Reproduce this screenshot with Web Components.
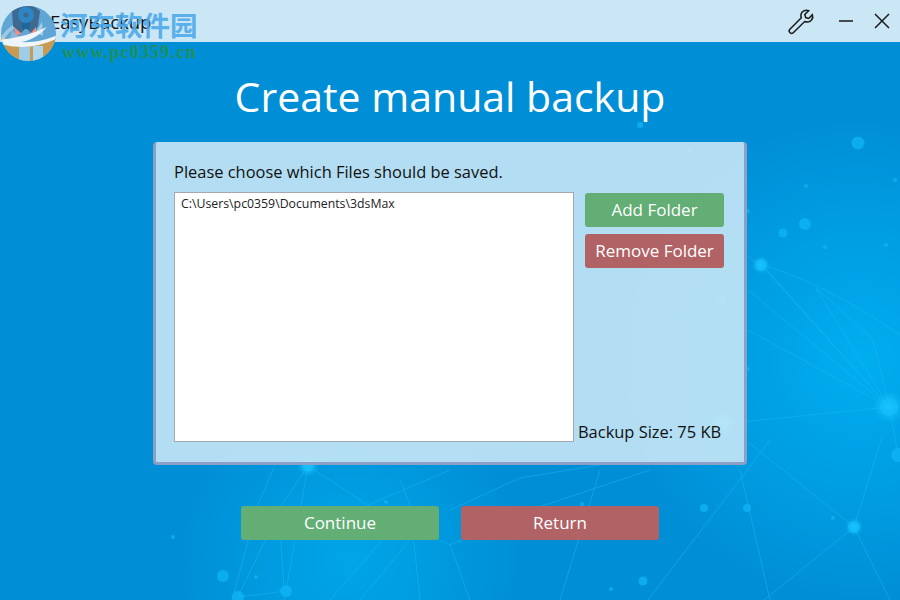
<!DOCTYPE html>
<html>
<head>
<meta charset="utf-8">
<title>EasyBackup</title>
<style>
html, body { margin: 0; padding: 0; }
body { width: 900px; height: 600px; overflow: hidden; font-family: "Open Sans", "Noto Sans", sans-serif; }
</style>
</head>
<body>
<backup-window>
  <app-titlebar slot="bar">EasyBackup</app-titlebar>
  <h-title slot="title">Create manual backup</h-title>
  <backup-panel slot="panel">
    <span slot="prompt">Please choose which Files should be saved.</span>
    <folder-list slot="list"><div>C:\Users\pc0359\Documents\3dsMax</div></folder-list>
    <flat-button slot="side" tone="green" h="34">Add Folder</flat-button>
    <flat-button slot="side" tone="red" h="34">Remove Folder</flat-button>
    <span slot="size">Backup Size: 75 KB</span>
  </backup-panel>
  <flat-button slot="foot" tone="green" h="34" w="198">Continue</flat-button>
  <flat-button slot="foot" tone="red" h="34" w="198">Return</flat-button>
</backup-window>

<script>
class NetBackdrop extends HTMLElement {
    constructor(){
        super();
        this.attachShadow({mode: "open"});
    }

    connectedCallback() {
        // nodes of the backdrop picture: x, y, radius
        const dots = [[858,143,6.5],[805,224,6],[783,233,4.500],[761,265,6],[889,407,9],[854,527,6],[898,455,7],
            [747,508,4],[704,508,4],[806,186,2],[895,180,2],[825,247,2],[886,245,2],[748,211,2],[748,369,2],
            [833,518,2],[722,300,4],[722,424,6],[308,466,5.500],[386,502,2],[582,504,2],[173,537,2],[223,576,6],
            [256,577,2],[286,591,6],[238,597,6],[643,581,4.500],[611,589,2],[640,125,3],[690,150,2]];
        const lines = [[761,265,889,407],[765,268,889,407],[816,288,889,407],[748,290,889,407],[748,330,889,407],
            [722,424,889,407],[748,442,854,527],[854,527,882,437],[854,527,764,600],[854,527,890,600],[889,407,898,455],
            [308,466,283,503],[283,503,238,597],[308,466,286,591],[308,466,368,505],[238,597,286,591],
            [275,465,258,505],[258,505,232,600],[368,505,450,470],[368,505,450,545],[400,480,410,505],[410,505,420,600],
            [450,510,520,478],[520,478,600,465],[450,545,470,600],[770,440,648,600],[740,470,770,600],
            [330,600,400,520],[360,600,410,540],[600,470,560,600],[285,600,280,530],
            [308,466,260,420],[308,466,320,400],[308,466,400,410],[722,424,600,380],[722,424,680,300],[600,380,500,460],
            [761,265,700,225],[700,300,600,340],[747,345,600,260]];
        const nodes = dots.map(d => `<circle cx="${d[0]}" cy="${d[1]}" r="${d[2]}"/>`).join("");
        const strokes = lines.map(l => `<line x1="${l[0]}" y1="${l[1]}" x2="${l[2]}" y2="${l[3]}"/>`).join("");
        this.shadowRoot.innerHTML = `
        <style>
        :host { position: absolute; inset: 0; display: block; }
        svg { display: block; }
        </style>
        <svg width="900" height="600" viewBox="0 0 900 600">
            <defs>
                <radialGradient id="glowR" cx="860" cy="360" r="240" gradientUnits="userSpaceOnUse">
                    <stop offset="0" stop-color="#00aeef"/><stop offset="1" stop-color="#00aeef" stop-opacity="0"/>
                </radialGradient>
                <radialGradient id="glowB" cx="350" cy="560" r="170" gradientUnits="userSpaceOnUse">
                    <stop offset="0" stop-color="#00a6e8"/><stop offset="1" stop-color="#00a6e8" stop-opacity="0"/>
                </radialGradient>
                <radialGradient id="halo"><stop offset="0" stop-color="#19c4ff"/><stop offset="1" stop-color="#19c4ff" stop-opacity="0"/></radialGradient>
            </defs>
            <rect width="900" height="600" fill="#008fd7"/>
            <rect width="900" height="600" fill="url(#glowR)"/>
            <rect width="900" height="600" fill="url(#glowB)"/>
            <g stroke="#1cb8f5" stroke-width="1" opacity=".5" fill="none">
                ${strokes}
                <path d="M761 265Q820 280 900 335"/>
                <path d="M816 288L868 335Q874 342 876 350L889 407"/>
                <path d="M450 545L530 510L650 470"/>
            </g>
            <g fill="#0fb4f6" opacity=".8">${nodes}</g>
            <circle cx="889" cy="407" r="16" fill="url(#halo)"/>
            <circle cx="761" cy="265" r="9" fill="url(#halo)"/>
            <circle cx="854" cy="527" r="9" fill="url(#halo)"/>
            <circle cx="308" cy="466" r="11" fill="url(#halo)"/>
            <circle cx="722" cy="424" r="14" fill="url(#halo)"/>
        </svg>`;
    }
}
customElements.define("net-backdrop", NetBackdrop);

class AppTitlebar extends HTMLElement {
    constructor(){
        super();
        this.attachShadow({mode: "open"});
    }

    connectedCallback() {
        this.shadowRoot.innerHTML = `
        <style>
        :host { display: flex; align-items: center; height: 42px; background: #cbe6f5; color: #111; font-size: 18.500px; padding-left: 50px; box-sizing: border-box; }
        .name { flex: 1; letter-spacing: -.1px; }
        .tools { display: flex; align-items: center; padding-right: 10px; }
        svg { display: block; fill: none; stroke: #1a1a1a; stroke-width: 1.5; }
        .wrench { margin-right: 22px; stroke-width: 1.3; }
        .dash { margin-right: 21px; }
        </style>
        <span class="name"><slot></slot></span>
        <div class="tools">
            <svg class="wrench" width="30" height="30" viewBox="0 0 26 26"><path d="M2.500 20.200L12.400 10.300C11.600 7.600 12.600 5.200 14.600 4.200C16 3.500 17.600 3.500 18.800 4.100L15.400 7.400L16.200 10L18.800 10.800L22 7.500C22.600 9 22.300 10.800 21.300 12.100C19.800 13.900 17.500 14.300 15.300 13.500L5.400 23.200C4.600 24 3.500 24 2.700 23.200L2.400 22.900C1.700 22.100 1.700 21 2.500 20.200Z"/></svg>
            <svg class="dash" width="14" height="2" viewBox="0 0 14 2"><path d="M0 1H14"/></svg>
            <svg width="16" height="16" viewBox="0 0 16 16"><path d="M1 1L15 15M15 1L1 15"/></svg>
        </div>`;
    }
}
customElements.define("app-titlebar", AppTitlebar);

class SiteStamp extends HTMLElement {
    constructor(){
        super();
        this.attachShadow({mode: "open"});
    }

    connectedCallback() {
        this.shadowRoot.innerHTML = `
        <style>
        :host { position: absolute; left: 0; top: 0; width: 210px; height: 66px; display: block; }
        svg { position: absolute; left: 0; top: 0; }
        .cn { position: absolute; left: 60px; top: 7px; font: 700 27.500px/34px "Noto Sans CJK SC", sans-serif; color: #4aa9e9; opacity: .88; }
        .url { position: absolute; left: 62px; top: 43px; font: 700 18px/19px "Liberation Serif", serif; color: #1f8f5a; letter-spacing: 1.2px; }
        </style>
        <svg width="64" height="64" viewBox="0 0 64 64">
            <defs><clipPath id="c"><circle cx="28.500" cy="33.500" r="27.500"/></clipPath></defs>
            <g clip-path="url(#c)">
                <rect width="64" height="64" fill="#5fa6d6"/>
                <path d="M0 36Q30 52 60 34V64H0Z" fill="#c99a52"/>
                <path d="M12 30L20 38H10Z" fill="#8db6d4"/>
                <path d="M0 38Q8 26 22 20L18 26Q8 32 4 40Z" fill="#b9d6e8" opacity=".7"/>
                <path d="M12 11Q26 -2 40 11L38 26L33 35L26 28L19 35L13 26Z" fill="#3e6a90"/>
                <circle cx="26" cy="15" r="8" fill="#2d85c4"/>
                <circle cx="26" cy="15" r="2.500" fill="#3e6a90"/>
                <rect x="22" y="23" width="8" height="6" fill="#1f669e"/>
                <path d="M14 27L22 34L16 35Z" fill="#ee8f84"/>
                <path d="M36 27L29 35L36 35Z" fill="#ee8f84"/>
                <path d="M36 32L42 22L43 36Z" fill="#a8d0e6"/>
                <path d="M0 38Q26 50 47 27Q30 36 0 40V44Q30 52 58 38L60 34Q30 48 0 38Z" fill="#eef6fb"/>
                <rect x="19" y="47" width="11" height="16" fill="#9ecde8"/>
                <rect x="33" y="46" width="10" height="17" fill="#aed8ee"/>
            </g>
        </svg>
        <span class="cn">河东软件园</span>
        <span class="url">www.pc0359.cn</span>`;
    }
}
customElements.define("site-stamp", SiteStamp);

class HTitle extends HTMLElement {
    constructor(){
        super();
        this.attachShadow({mode: "open"});
    }

    connectedCallback() {
        this.shadowRoot.innerHTML = `
        <style>
        :host { display: block; text-align: center; color: #fff; font-size: 41px; line-height: 56px; letter-spacing: 0; }
        </style>
        <slot></slot>`;
    }
}
customElements.define("h-title", HTitle);

class FolderList extends HTMLElement {
    constructor(){
        super();
        this.attachShadow({mode: "open"});
    }

    connectedCallback() {
        this.shadowRoot.innerHTML = `
        <style>
        :host { display: block; width: 400px; height: 250px; box-sizing: border-box; background: #fff; border: 1px solid #a3a8b0; padding: 2px 6px; font-size: 12.300px; line-height: 17px; color: #222; }
        </style>
        <slot></slot>`;
    }
}
customElements.define("folder-list", FolderList);

class FlatButton extends HTMLElement {
    constructor(){
        super();
        this.attachShadow({mode: "open"});
    }

    connectedCallback() {
        const tone = this.getAttribute("tone") === "red" ? "#b06265" : "#62ae74";
        const h = this.getAttribute("h") || 34;
        const w = this.getAttribute("w");
        this.shadowRoot.innerHTML = `
        <style>
        :host { display: flex; align-items: center; justify-content: center; height: ${h}px; ${w ? `width: ${w}px;` : ""} box-sizing: border-box; padding-bottom: 1px; background: ${tone}; border-radius: 3px; color: #fff; font-size: 17px; }
        </style>
        <slot></slot>`;
    }
}
customElements.define("flat-button", FlatButton);

class BackupPanel extends HTMLElement {
    constructor(){
        super();
        this.attachShadow({mode: "open"});
    }

    connectedCallback() {
        this.shadowRoot.innerHTML = `
        <style>
        :host { display: block; width: 594px; height: 323px; box-sizing: border-box; background: rgba(204, 232, 246, .88); border: solid #8c9fc6; border-width: 0 3px 3px 3px; border-radius: 4px; padding: 19px 20px 0 18px; color: #111; font-size: 16.450px; }
        .prompt { line-height: 22px; height: 31px; }
        .body { display: flex; }
        .side { flex: 1; display: flex; flex-direction: column; margin-left: 4px; }
        .btns { display: flex; flex-direction: column; gap: 7px; padding: 1px 0 0 7px; flex: 1; }
        .size { line-height: 20px; white-space: nowrap; }
        </style>
        <div class="prompt"><slot name="prompt"></slot></div>
        <div class="body">
            <slot name="list"></slot>
            <div class="side">
                <div class="btns"><slot name="side"></slot></div>
                <div class="size"><slot name="size"></slot></div>
            </div>
        </div>`;
    }
}
customElements.define("backup-panel", BackupPanel);

class BackupWindow extends HTMLElement {
    constructor(){
        super();
        this.attachShadow({mode: "open"});
    }

    connectedCallback() {
        this.shadowRoot.innerHTML = `
        <style>
        :host { position: relative; display: block; width: 900px; height: 600px; overflow: hidden; }
        .content { position: relative; display: flex; flex-direction: column; height: 100%; }
        .title { padding-top: 26px; height: 74px; }
        .panel { display: flex; justify-content: center; }
        .foot { display: flex; justify-content: center; gap: 22px; padding-top: 41px; }
        </style>
        <net-backdrop></net-backdrop>
        <div class="content">
            <slot name="bar"></slot>
            <div class="title"><slot name="title"></slot></div>
            <div class="panel"><slot name="panel"></slot></div>
            <div class="foot"><slot name="foot"></slot></div>
        </div>
        <site-stamp></site-stamp>`;
    }
}
customElements.define("backup-window", BackupWindow);
</script>
</body>
</html>
